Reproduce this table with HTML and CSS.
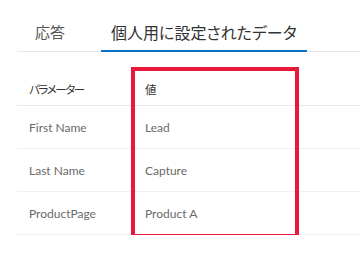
FILE: index.html
```html
<!DOCTYPE html>
<html lang="ja">
<head>
<meta charset="utf-8">
<link rel="stylesheet" href="styles.css">
</head>
<body>
<div class="page">
  <div class="tabs">
    <div class="tab">応答</div>
    <div class="tab active">個人用に設定されたデータ</div>
  </div>
  <div class="table">
    <div class="row head">
      <div class="cell c1">パラメーター</div>
      <div class="cell c2">値</div>
    </div>
    <div class="row">
      <div class="cell c1">First Name</div>
      <div class="cell c2">Lead</div>
    </div>
    <div class="row">
      <div class="cell c1">Last Name</div>
      <div class="cell c2">Capture</div>
    </div>
    <div class="row">
      <div class="cell c1">ProductPage</div>
      <div class="cell c2">Product A</div>
    </div>
    <div class="highlight"></div>
  </div>
</div>
</body>
</html>
```
FILE: styles.css
```css
html, body {
  margin: 0;
  padding: 0;
  background: #fff;
}
body {
  font-family: "Lato", "Noto Sans CJK JP", sans-serif;
}
.page {
  padding-left: 17px;
}
.tabs {
  display: flex;
  align-items: flex-end;
  height: 52px;
  border-bottom: 1px solid #e6e6e6;
  box-sizing: border-box;
}
.tab {
  font-family: "Noto Sans CJK JP", sans-serif;
  font-feature-settings: "palt";
  font-size: 15px;
  color: #555;
  padding-left: 18px;
  width: 84px;
  box-sizing: border-box;
  height: 34px;
  line-height: 30px;
}
.tab.active {
  width: auto;
  font-size: 16px;
  color: #333;
  padding: 0 10px;
  border-bottom: 2px solid #0a6fc9;
  line-height: 30px;
  box-sizing: border-box;
  margin-bottom: -1px;
  height: 35px;
}
.table {
  position: relative;
  margin-top: 11px;
}
.row {
  display: flex;
  height: 43px;
  align-items: center;
  border-bottom: 1px solid #f0f0f0;
  box-sizing: border-box;
  font-size: 12px;
  color: #6a6a6a;
}
.row.head {
  height: 43px;
  padding-top: 10px;
  color: #333;
  font-size: 11.5px;
  letter-spacing: -1.4px;
  font-family: "Noto Sans CJK JP", sans-serif;
  font-feature-settings: "palt";
  border-bottom-color: #e8e8e8;
}
.cell {
  padding-left: 12px;
}
.c1 {
  width: 104px;
}
.highlight {
  position: absolute;
  left: 114px;
  top: 4px;
  width: 168px;
  height: 171px;
  border: 4px solid #e8193b;
  box-sizing: border-box;
}
```
